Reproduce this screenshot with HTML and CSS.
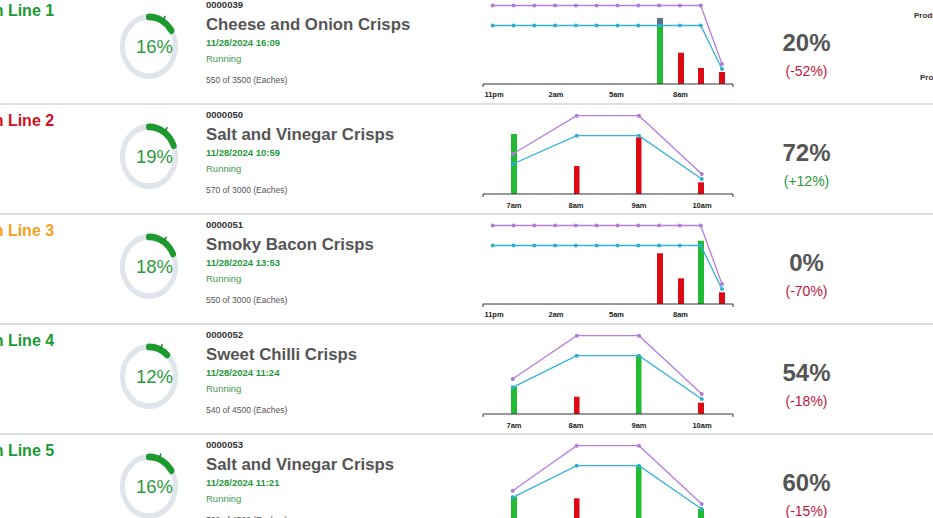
FILE: index.html
```html
<!DOCTYPE html>
<html>
<head>
<meta charset="utf-8">
<link rel="stylesheet" href="styles.css">
</head>
<body>
<div class="lines">

  <!-- Row 1 -->
  <div class="row">
    <div class="label"><div class="label-text green">Production Line 1</div></div>
    <div class="donut">
      <svg viewBox="0 0 60 60" width="60" height="67" preserveAspectRatio="none">
        <circle class="ring" cx="30" cy="30" r="26.5"/>
        <circle class="arc" cx="30" cy="30" r="26.5" stroke-dasharray="26.6 200" transform="rotate(-90 30 30)"/>
        <line class="tick" x1="44.5" y1="5.7" x2="46.3" y2="2.7"/>
      </svg>
      <div class="pct">16%</div>
    </div>
    <div class="info">
      <div class="id">0000039</div>
      <div class="title">Cheese and Onion Crisps</div>
      <div class="date">11/28/2024 16:09</div>
      <div class="status">Running</div>
      <div class="count">550 of 3500 (Eaches)</div>
    </div>
    <div class="chart">
      <svg viewBox="0 0 270 108" width="270" height="108">
        <rect class="bar-cap" x="187" y="23" width="6" height="7"/>
        <rect class="bar-g" x="187" y="30" width="6" height="59"/>
        <rect class="bar-r" x="208" y="57.7" width="6" height="31.3"/>
        <rect class="bar-r" x="228" y="73" width="6" height="16"/>
        <rect class="bar-r" x="249" y="77" width="6" height="12"/>
        <polyline class="ln-p" points="22.7,10.5 43.5,10.5 64.3,10.5 85.1,10.5 105.9,10.5 126.7,10.5 147.5,10.5 168.3,10.5 189.1,10.5 209.9,10.5 230.7,10.5 252,69"/>
        <polyline class="ln-c" points="22.7,30.5 43.5,30.5 64.3,30.5 85.1,30.5 105.9,30.5 126.7,30.5 147.5,30.5 168.3,30.5 189.1,30.5 209.9,30.5 230.7,30.5 252,74"/>
        <g class="pt-p"><circle cx="22.7" cy="10.5" r="2"/><circle cx="43.5" cy="10.5" r="2"/><circle cx="64.3" cy="10.5" r="2"/><circle cx="85.1" cy="10.5" r="2"/><circle cx="105.9" cy="10.5" r="2"/><circle cx="126.7" cy="10.5" r="2"/><circle cx="147.5" cy="10.5" r="2"/><circle cx="168.3" cy="10.5" r="2"/><circle cx="189.1" cy="10.5" r="2"/><circle cx="209.9" cy="10.5" r="2"/><circle cx="230.7" cy="10.5" r="2"/><circle cx="252" cy="69" r="2"/></g>
        <g class="pt-c"><circle cx="22.7" cy="30.5" r="2"/><circle cx="43.5" cy="30.5" r="2"/><circle cx="64.3" cy="30.5" r="2"/><circle cx="85.1" cy="30.5" r="2"/><circle cx="105.9" cy="30.5" r="2"/><circle cx="126.7" cy="30.5" r="2"/><circle cx="147.5" cy="30.5" r="2"/><circle cx="168.3" cy="30.5" r="2"/><circle cx="189.1" cy="30.5" r="2"/><circle cx="209.9" cy="30.5" r="2"/><circle cx="230.7" cy="30.5" r="2"/><circle cx="252" cy="74" r="2"/></g>
        <path class="axis" d="M13 92 V89 H263 V92"/>
        <g class="ax-lbl"><text x="24" y="101.5">11pm</text><text x="86" y="101.5">2am</text><text x="146.5" y="101.5">5am</text><text x="210.5" y="101.5">8am</text></g>
      </svg>
    </div>
    <div class="value">
      <div class="big">20%</div>
      <div class="delta neg">(-52%)</div>
    </div>
    <div class="extra">
      <div class="ex1">Production</div>
      <div class="ex2">Production</div>
    </div>
  </div>

  <!-- Row 2 -->
  <div class="row">
    <div class="label"><div class="label-text red">Production Line 2</div></div>
    <div class="donut">
      <svg viewBox="0 0 60 60" width="60" height="67" preserveAspectRatio="none">
        <circle class="ring" cx="30" cy="30" r="26.5"/>
        <circle class="arc" cx="30" cy="30" r="26.5" stroke-dasharray="31.6 200" transform="rotate(-90 30 30)"/>
        <line class="tick" x1="46.1" y1="7.1" x2="48.4" y2="3.8"/>
      </svg>
      <div class="pct">19%</div>
    </div>
    <div class="info">
      <div class="id">0000050</div>
      <div class="title">Salt and Vinegar Crisps</div>
      <div class="date">11/28/2024 10:59</div>
      <div class="status">Running</div>
      <div class="count">570 of 3000 (Eaches)</div>
    </div>
    <div class="chart">
      <svg viewBox="0 0 270 108" width="270" height="108">
        <rect class="bar-g" x="41" y="29" width="6" height="60"/>
        <rect class="bar-r" x="104" y="61" width="5.5" height="28"/>
        <rect class="bar-r" x="166" y="32.3" width="5.5" height="56.7"/>
        <rect class="bar-r" x="228" y="77.3" width="6" height="11.7"/>
        <polyline class="ln-p" points="42.7,49 106.7,10.7 169,10.7 231.7,69"/>
        <polyline class="ln-c" points="42.7,59 106.7,30.7 169,30.7 231.7,74"/>
        <g class="pt-p"><circle cx="42.7" cy="49" r="2"/><circle cx="106.7" cy="10.7" r="2"/><circle cx="169" cy="10.7" r="2"/><circle cx="231.7" cy="69" r="2"/></g>
        <g class="pt-c"><circle cx="42.7" cy="59" r="2"/><circle cx="106.7" cy="30.7" r="2"/><circle cx="169" cy="30.7" r="2"/><circle cx="231.7" cy="74" r="2"/></g>
        <path class="axis" d="M13 92 V89 H263 V92"/>
        <g class="ax-lbl"><text x="44" y="102.5">7am</text><text x="106" y="102.5">8am</text><text x="169" y="102.5">9am</text><text x="232" y="102.5">10am</text></g>
      </svg>
    </div>
    <div class="value">
      <div class="big">72%</div>
      <div class="delta pos">(+12%)</div>
    </div>
    <div class="extra"></div>
  </div>

  <!-- Row 3 -->
  <div class="row">
    <div class="label"><div class="label-text orange">Production Line 3</div></div>
    <div class="donut">
      <svg viewBox="0 0 60 60" width="60" height="67" preserveAspectRatio="none">
        <circle class="ring" cx="30" cy="30" r="26.5"/>
        <circle class="arc" cx="30" cy="30" r="26.5" stroke-dasharray="30 200" transform="rotate(-90 30 30)"/>
        <line class="tick" x1="45.3" y1="6.5" x2="47.4" y2="3.2"/>
      </svg>
      <div class="pct">18%</div>
    </div>
    <div class="info">
      <div class="id">0000051</div>
      <div class="title">Smoky Bacon Crisps</div>
      <div class="date">11/28/2024 13:53</div>
      <div class="status">Running</div>
      <div class="count">550 of 3000 (Eaches)</div>
    </div>
    <div class="chart">
      <svg viewBox="0 0 270 108" width="270" height="108">
        <rect class="bar-r" x="187" y="38.3" width="6" height="50.7"/>
        <rect class="bar-r" x="208" y="63.3" width="6" height="25.7"/>
        <rect class="bar-g" x="228" y="25.7" width="6" height="63.3"/>
        <rect class="bar-r" x="249" y="77.3" width="6" height="11.7"/>
        <polyline class="ln-p" points="22.7,10.5 43.5,10.5 64.3,10.5 85.1,10.5 105.9,10.5 126.7,10.5 147.5,10.5 168.3,10.5 189.1,10.5 209.9,10.5 230.7,10.5 252,69"/>
        <polyline class="ln-c" points="22.7,30.5 43.5,30.5 64.3,30.5 85.1,30.5 105.9,30.5 126.7,30.5 147.5,30.5 168.3,30.5 189.1,30.5 209.9,30.5 230.7,30.5 252,74"/>
        <g class="pt-p"><circle cx="22.7" cy="10.5" r="2"/><circle cx="43.5" cy="10.5" r="2"/><circle cx="64.3" cy="10.5" r="2"/><circle cx="85.1" cy="10.5" r="2"/><circle cx="105.9" cy="10.5" r="2"/><circle cx="126.7" cy="10.5" r="2"/><circle cx="147.5" cy="10.5" r="2"/><circle cx="168.3" cy="10.5" r="2"/><circle cx="189.1" cy="10.5" r="2"/><circle cx="209.9" cy="10.5" r="2"/><circle cx="230.7" cy="10.5" r="2"/><circle cx="252" cy="69" r="2"/></g>
        <g class="pt-c"><circle cx="22.7" cy="30.5" r="2"/><circle cx="43.5" cy="30.5" r="2"/><circle cx="64.3" cy="30.5" r="2"/><circle cx="85.1" cy="30.5" r="2"/><circle cx="105.9" cy="30.5" r="2"/><circle cx="126.7" cy="30.5" r="2"/><circle cx="147.5" cy="30.5" r="2"/><circle cx="168.3" cy="30.5" r="2"/><circle cx="189.1" cy="30.5" r="2"/><circle cx="209.9" cy="30.5" r="2"/><circle cx="230.7" cy="30.5" r="2"/><circle cx="252" cy="74" r="2"/></g>
        <path class="axis" d="M13 92 V89 H263 V92"/>
        <g class="ax-lbl"><text x="24" y="101.5">11pm</text><text x="86" y="101.5">2am</text><text x="146.5" y="101.5">5am</text><text x="210.5" y="101.5">8am</text></g>
      </svg>
    </div>
    <div class="value">
      <div class="big">0%</div>
      <div class="delta neg">(-70%)</div>
    </div>
    <div class="extra"></div>
  </div>

  <!-- Row 4 -->
  <div class="row">
    <div class="label"><div class="label-text green">Production Line 4</div></div>
    <div class="donut">
      <svg viewBox="0 0 60 60" width="60" height="67" preserveAspectRatio="none">
        <circle class="ring" cx="30" cy="30" r="26.5"/>
        <circle class="arc" cx="30" cy="30" r="26.5" stroke-dasharray="20 200" transform="rotate(-90 30 30)"/>
        <line class="tick" x1="41.8" y1="4.6" x2="43.5" y2="1.1"/>
      </svg>
      <div class="pct">12%</div>
    </div>
    <div class="info">
      <div class="id">0000052</div>
      <div class="title">Sweet Chilli Crisps</div>
      <div class="date">11/28/2024 11:24</div>
      <div class="status">Running</div>
      <div class="count">540 of 4500 (Eaches)</div>
    </div>
    <div class="chart">
      <svg viewBox="0 0 270 108" width="270" height="108">
        <rect class="bar-g" x="41" y="61.7" width="6" height="27.3"/>
        <rect class="bar-r" x="104" y="71.7" width="5.5" height="17.3"/>
        <rect class="bar-g" x="166" y="30.7" width="5.5" height="58.3"/>
        <rect class="bar-r" x="228" y="77.7" width="6" height="11.3"/>
        <polyline class="ln-p" points="42.7,54 106.7,10.7 169,10.7 231.7,69"/>
        <polyline class="ln-c" points="42.7,62.3 106.7,30.7 169,30.7 231.7,74"/>
        <g class="pt-p"><circle cx="42.7" cy="54" r="2"/><circle cx="106.7" cy="10.7" r="2"/><circle cx="169" cy="10.7" r="2"/><circle cx="231.7" cy="69" r="2"/></g>
        <g class="pt-c"><circle cx="42.7" cy="62.3" r="2"/><circle cx="106.7" cy="30.7" r="2"/><circle cx="169" cy="30.7" r="2"/><circle cx="231.7" cy="74" r="2"/></g>
        <path class="axis" d="M13 92 V89 H263 V92"/>
        <g class="ax-lbl"><text x="44" y="102.5">7am</text><text x="106" y="102.5">8am</text><text x="169" y="102.5">9am</text><text x="232" y="102.5">10am</text></g>
      </svg>
    </div>
    <div class="value">
      <div class="big">54%</div>
      <div class="delta neg">(-18%)</div>
    </div>
    <div class="extra"></div>
  </div>

  <!-- Row 5 -->
  <div class="row">
    <div class="label"><div class="label-text green">Production Line 5</div></div>
    <div class="donut">
      <svg viewBox="0 0 60 60" width="60" height="67" preserveAspectRatio="none">
        <circle class="ring" cx="30" cy="30" r="26.5"/>
        <circle class="arc" cx="30" cy="30" r="26.5" stroke-dasharray="26.6 200" transform="rotate(-90 30 30)"/>
        <line class="tick" x1="40.5" y1="4.1" x2="42" y2="0.4"/>
      </svg>
      <div class="pct">16%</div>
    </div>
    <div class="info">
      <div class="id">0000053</div>
      <div class="title">Salt and Vinegar Crisps</div>
      <div class="date">11/28/2024 11:21</div>
      <div class="status">Running</div>
      <div class="count">700 of 4500 (Eaches)</div>
    </div>
    <div class="chart">
      <svg viewBox="0 0 270 108" width="270" height="108">
        <rect class="bar-g" x="41" y="61.7" width="6" height="27.3"/>
        <rect class="bar-r" x="104" y="63.3" width="5.5" height="25.7"/>
        <rect class="bar-g" x="166" y="30.7" width="5.5" height="58.3"/>
        <rect class="bar-g" x="228" y="74" width="6" height="15"/>
        <polyline class="ln-p" points="42.7,55.7 106.7,10.7 169,10.7 231.7,69"/>
        <polyline class="ln-c" points="42.7,62.3 106.7,30.7 169,30.7 231.7,74"/>
        <g class="pt-p"><circle cx="42.7" cy="55.7" r="2"/><circle cx="106.7" cy="10.7" r="2"/><circle cx="169" cy="10.7" r="2"/><circle cx="231.7" cy="69" r="2"/></g>
        <g class="pt-c"><circle cx="42.7" cy="62.3" r="2"/><circle cx="106.7" cy="30.7" r="2"/><circle cx="169" cy="30.7" r="2"/><circle cx="231.7" cy="74" r="2"/></g>
        <path class="axis" d="M13 92 V89 H263 V92"/>
        <g class="ax-lbl"><text x="44" y="102.5">7am</text><text x="106" y="102.5">8am</text><text x="169" y="102.5">9am</text><text x="232" y="102.5">10am</text></g>
      </svg>
    </div>
    <div class="value">
      <div class="big">60%</div>
      <div class="delta neg">(-15%)</div>
    </div>
    <div class="extra"></div>
  </div>

</div>
</body>
</html>
```

FILE: styles.css
```css
html, body {
  margin: 0;
  padding: 0;
  overflow: hidden;
  background: #ffffff;
}
body {
  width: 933px;
  height: 518px;
  font-family: "Liberation Sans", Arial, sans-serif;
  color: #555555;
}
.lines {
  margin-top: -5px;
}
.row {
  display: flex;
  height: 108px;
  border-bottom: 2px solid #dedede;
}

/* line label */
.label {
  width: 114px;
  flex: none;
  overflow: hidden;
}
.label-text {
  margin-left: -81px;
  padding-top: 6px;
  font-size: 16px;
  line-height: 20px;
  font-weight: bold;
  white-space: nowrap;
}
.label-text.green { color: #1b9a33; }
.label-text.red { color: #d0101c; }
.label-text.orange { color: #f4a01e; }

/* donut */
.donut {
  width: 92px;
  flex: none;
  box-sizing: border-box;
  padding-top: 18px;
  padding-left: 5px;
  display: grid;
  align-content: start;
  justify-content: start;
}
.donut svg,
.donut .pct {
  grid-area: 1 / 1;
}
.donut svg {
  overflow: visible;
}
.ring {
  fill: none;
  stroke: #dfe5ea;
  stroke-width: 5;
}
.arc {
  fill: none;
  stroke: #1c9a2e;
  stroke-width: 6;
  stroke-linecap: round;
}
.tick {
  stroke: #1c7a2a;
  stroke-width: 1.4;
}
.pct {
  width: 49px;
  padding-left: 11px;
  text-align: center;
  font-size: 18.5px;
  line-height: 67px;
  color: #2a9a3a;
}

/* info */
.info {
  width: 264px;
  flex: none;
  display: flex;
  flex-direction: column;
  padding-top: 4px;
  white-space: nowrap;
}
.id {
  font-size: 9.5px;
  line-height: 12px;
  font-weight: bold;
  color: #333333;
}
.title {
  margin-top: 3px;
  font-size: 16.8px;
  line-height: 22px;
  font-weight: bold;
  color: #555555;
}
.date {
  font-size: 9.5px;
  line-height: 14px;
  font-weight: bold;
  color: #1f9a3c;
}
.status {
  margin-top: 2px;
  font-size: 9.5px;
  line-height: 14px;
  color: #3f9a55;
}
.count {
  margin-top: 8px;
  font-size: 8.5px;
  line-height: 12px;
  color: #555555;
}

/* chart */
.chart {
  width: 270px;
  flex: none;
}
.chart svg {
  display: block;
  overflow: visible;
}
.bar-g { fill: #22bb33; }
.bar-r { fill: #dd0a14; }
.bar-cap { fill: #5a6e84; }
.ln-p {
  fill: none;
  stroke: #b47fdc;
  stroke-width: 1.3;
}
.ln-c {
  fill: none;
  stroke: #33b3d6;
  stroke-width: 1.3;
}
.pt-p circle { fill: #b07bd8; }
.pt-c circle { fill: #30aed2; }
.axis {
  fill: none;
  stroke: #333333;
  stroke-width: 1;
}
.ax-lbl text {
  font-family: "Liberation Sans", Arial, sans-serif;
  font-size: 7.5px;
  font-weight: bold;
  fill: #222222;
  text-anchor: middle;
}

/* value */
.value {
  width: 133px;
  flex: none;
  display: flex;
  flex-direction: column;
  align-items: center;
  padding-top: 34px;
}
.big {
  font-size: 24px;
  line-height: 28px;
  font-weight: bold;
  color: #555555;
}
.delta {
  margin-top: 5px;
  font-size: 14px;
  line-height: 18px;
}
.delta.neg { color: #c4143c; }
.delta.pos { color: #2a9a3a; }

/* far right */
.extra {
  flex: 1;
  overflow: hidden;
  display: flex;
  flex-direction: column;
  white-space: nowrap;
  font-size: 8px;
  line-height: 10px;
  font-weight: bold;
  color: #333333;
}
.ex1 {
  padding-left: 41px;
  margin-top: 16px;
}
.ex2 {
  padding-left: 47px;
  margin-top: 52px;
}
```
